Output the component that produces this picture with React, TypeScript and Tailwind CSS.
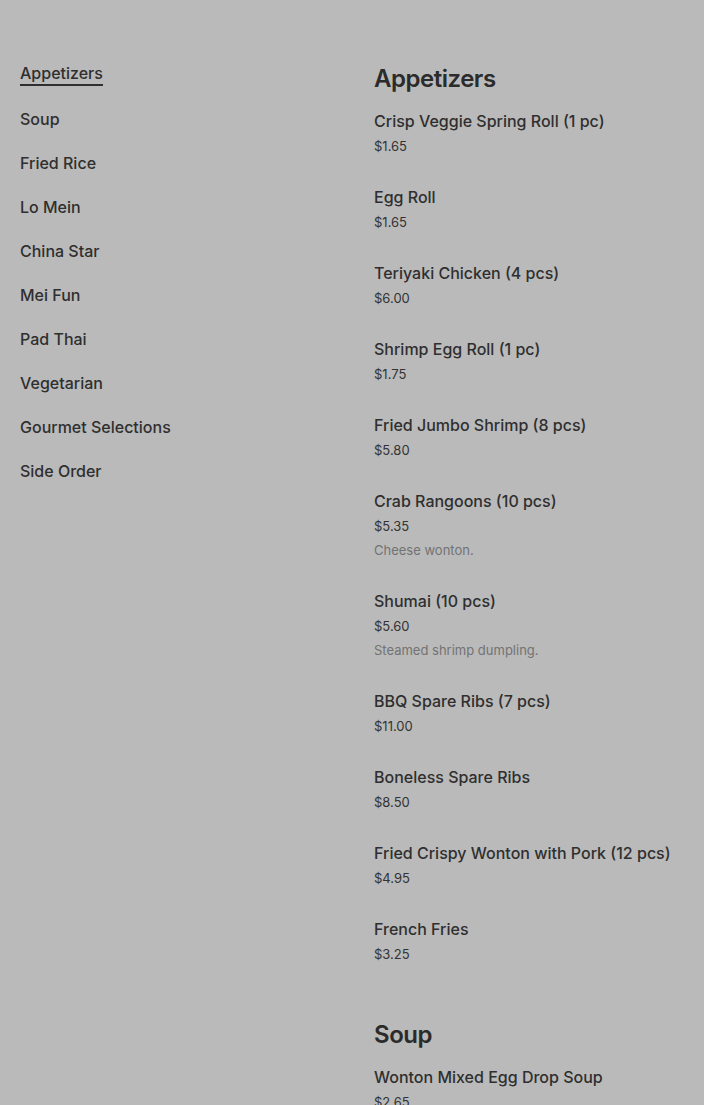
const categories = [
  "Appetizers",
  "Soup",
  "Fried Rice",
  "Lo Mein",
  "China Star",
  "Mei Fun",
  "Pad Thai",
  "Vegetarian",
  "Gourmet Selections",
  "Side Order",
];

type Item = { name: string; price: string; desc?: string };

const sections: { title: string; items: Item[] }[] = [
  {
    title: "Appetizers",
    items: [
      { name: "Crisp Veggie Spring Roll (1 pc)", price: "$1.65" },
      { name: "Egg Roll", price: "$1.65" },
      { name: "Teriyaki Chicken (4 pcs)", price: "$6.00" },
      { name: "Shrimp Egg Roll (1 pc)", price: "$1.75" },
      { name: "Fried Jumbo Shrimp (8 pcs)", price: "$5.80" },
      { name: "Crab Rangoons (10 pcs)", price: "$5.35", desc: "Cheese wonton." },
      { name: "Shumai (10 pcs)", price: "$5.60", desc: "Steamed shrimp dumpling." },
      { name: "BBQ Spare Ribs (7 pcs)", price: "$11.00" },
      { name: "Boneless Spare Ribs", price: "$8.50" },
      { name: "Fried Crispy Wonton with Pork (12 pcs)", price: "$4.95" },
      { name: "French Fries", price: "$3.25" },
    ],
  },
  {
    title: "Soup",
    items: [{ name: "Wonton Mixed Egg Drop Soup", price: "$2.65" }],
  },
];

const App = () => {
  return (
    <div
      className="min-h-screen bg-[#bababa] text-[#2f2f2f] overflow-hidden h-[1105px]"
      style={{ fontFamily: "Inter, 'Noto Sans', sans-serif" }}
    >
      <div className="flex pt-[61px]">
        {/* category nav */}
        <nav className="w-[374px] shrink-0 pl-5 flex flex-col gap-5">
          {categories.map((c, i) => (
            <div key={c} className="leading-6">
              {i === 0 ? (
                <span className="inline-block text-base font-medium leading-[22px] border-b-2 border-[#2f2f2f] mb-[1px]">
                  {c}
                </span>
              ) : (
                <span className="text-base font-medium">{c}</span>
              )}
            </div>
          ))}
        </nav>

        {/* menu list */}
        <main className="flex-1 pt-[2px] flex flex-col gap-[53px]">
          {sections.map((s) => (
            <section key={s.title}>
              <h2 className="text-2xl font-semibold leading-8 tracking-[-0.02em] text-[#2b2b2b]">{s.title}</h2>
              <div className="mt-[14px] flex flex-col gap-[27px]">
                {s.items.map((it) => (
                  <div key={it.name}>
                    <div className="text-base font-medium leading-6">{it.name}</div>
                    <div className="text-[13px] leading-6 mt-[1px] text-[#333]">{it.price}</div>
                    {it.desc && (
                      <div className="text-[13px] leading-6 text-[#737373]">{it.desc}</div>
                    )}
                  </div>
                ))}
              </div>
            </section>
          ))}
        </main>
      </div>
    </div>
  );
};

export default App;
